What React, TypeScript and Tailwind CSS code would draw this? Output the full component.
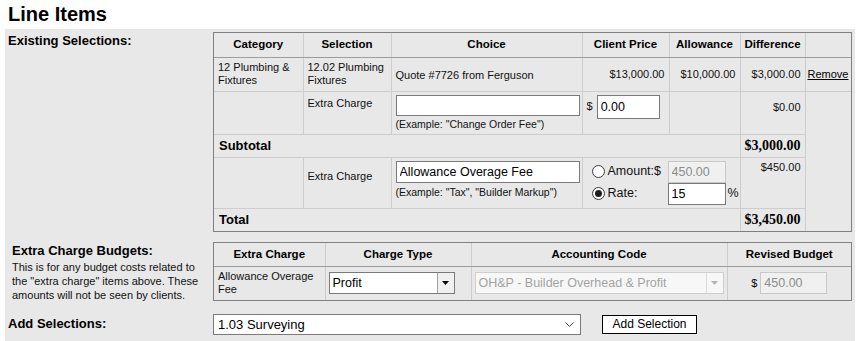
import React from 'react'

const cell = 'border border-[#cdcdcd] px-[4px] py-0 align-middle'
const head = 'border border-[#cdcdcd] border-b-[#9c9c9c] text-center text-[11.5px] font-bold text-black align-middle'
const serifTotal = "font-['Liberation_Serif','Times_New_Roman',serif] text-[14px] font-bold text-black"

const TriangleDown: React.FC<{ color?: string }> = ({ color = '#000' }) => (
  <svg width="7" height="4" viewBox="0 0 7 4">
    <path d="M0 0h7L3.5 4z" fill={color} />
  </svg>
)

const Radio: React.FC<{ checked?: boolean }> = ({ checked }) => (
  <span className="flex h-[13px] w-[13px] shrink-0 items-center justify-center rounded-full border border-[#3c3c3c] bg-white">
    {checked && <span className="h-[7px] w-[7px] rounded-full bg-[#1e1e1e]" />}
  </span>
)

interface BoxProps {
  value: string
  className?: string
  disabled?: boolean
}

// plain text box in the old windows look
const TextBox: React.FC<BoxProps> = ({ value, className = '', disabled }) => (
  <input
    readOnly
    value={value}
    className={`block border px-[3px] text-[12.5px] outline-none ${
      disabled ? 'border-[#c8c8c8] bg-[#f0f0f0] text-[#8c8c8c]' : 'border-[#7a7a7a] bg-white text-black'
    } ${className}`}
  />
)

export default function App() {
  return (
    <div className="h-[341px] w-[863px] overflow-hidden bg-white font-['Liberation_Sans',Arial,sans-serif] text-[#111]">
      <h1 className="h-[29px] pl-[8px] pt-[2px] text-[20px] font-bold leading-[24px] text-black">Line Items</h1>

      <div className="ml-[5px] min-h-[320px] w-[850px] bg-[#e8e8e8] pt-[3px]">
        {/* Existing selections */}
        <div className="grid grid-cols-[208px_639px]">
          <div className="pl-[3px] pt-[1px] text-[13px] font-bold leading-[15px] text-black">Existing Selections:</div>
          <div className="border border-[#808080]">
            <table className="w-[637px] table-fixed border-collapse border-hidden text-[11px] leading-[13px]">
              <colgroup>
                <col className="w-[89px]" />
                <col className="w-[88px]" />
                <col className="w-[191px]" />
                <col className="w-[87px]" />
                <col className="w-[71px]" />
                <col className="w-[65px]" />
                <col className="w-[46px]" />
              </colgroup>
              <thead>
                <tr className="h-[24px]">
                  <th className={head}>Category</th>
                  <th className={head}>Selection</th>
                  <th className={head}>Choice</th>
                  <th className={head}>Client Price</th>
                  <th className={head}>Allowance</th>
                  <th className={head}>Difference</th>
                  <th className={head}></th>
                </tr>
              </thead>
              <tbody>
                <tr className="h-[34px]">
                  <td className={cell}>
                    12 Plumbing &amp;
                    <br />
                    Fixtures
                  </td>
                  <td className={cell}>
                    12.02 Plumbing
                    <br />
                    Fixtures
                  </td>
                  <td className={`${cell} pt-[3px]`}>Quote #7726 from Ferguson</td>
                  <td className={`${cell} text-right`}>$13,000.00</td>
                  <td className={`${cell} text-right`}>$10,000.00</td>
                  <td className={`${cell} text-right`}>$3,000.00</td>
                  <td className={`${cell} pl-[2px]`}>
                    <span className="text-black underline">Remove</span>
                  </td>
                </tr>
                <tr className="h-[43px]">
                  <td className={cell}></td>
                  <td className={`${cell} pt-[5px] align-top`}>Extra Charge</td>
                  <td className={`${cell} pt-[3px] align-top`}>
                    <TextBox value="" className="h-[21px] w-[184px]" />
                    <div className="mt-[2px] text-[10.5px] leading-[12px]">(Example: "Change Order Fee")</div>
                  </td>
                  <td className={`${cell} pt-[3px] align-top`}>
                    <div className="flex items-center">
                      <span className="mr-[4px]">$</span>
                      <TextBox value="0.00" className="h-[24px] w-[63px]" />
                    </div>
                  </td>
                  <td className={cell}></td>
                  <td className={`${cell} pt-[9px] text-right align-top`}>$0.00</td>
                  <td className={cell} rowSpan={5}></td>
                </tr>
                <tr className="h-[23px]">
                  <td className={`${cell} pl-[5px] text-[13px] font-bold text-black`} colSpan={5}>
                    Subtotal
                  </td>
                  <td className={`${cell} text-right ${serifTotal}`}>$3,000.00</td>
                </tr>
                <tr className="h-[51px]">
                  <td className={cell}></td>
                  <td className={`${cell} pt-[12px] align-top`}>Extra Charge</td>
                  <td className={`${cell} pt-[3px] align-top`}>
                    <TextBox value="Allowance Overage Fee" className="h-[22px] w-[184px]" />
                    <div className="mt-[3px] text-[10.5px] leading-[12px]">(Example: "Tax", "Builder Markup")</div>
                  </td>
                  <td className={`${cell} pl-[9px] pt-[3px] align-top`} colSpan={2}>
                    <div className="grid grid-cols-[76px_58px_auto] grid-rows-[22px_22px] items-center text-[12.5px]">
                      <div className="flex items-center gap-[3px]">
                        <Radio />
                        <span>Amount:$</span>
                      </div>
                      <TextBox value="450.00" disabled className="h-[22px] w-[58px]" />
                      <span></span>
                      <div className="flex items-center gap-[3px]">
                        <Radio checked />
                        <span>Rate:</span>
                      </div>
                      <TextBox value="15" className="h-[22px] w-[58px]" />
                      <span className="pl-[2px]">%</span>
                    </div>
                  </td>
                  <td className={`${cell} pt-[3px] text-right align-top`}>$450.00</td>
                </tr>
                <tr className="h-[23px]">
                  <td className={`${cell} pl-[5px] text-[13px] font-bold text-black`} colSpan={5}>
                    Total
                  </td>
                  <td className={`${cell} text-right ${serifTotal}`}>$3,450.00</td>
                </tr>
              </tbody>
            </table>
          </div>
        </div>

        {/* Extra charge budgets */}
        <div className="mt-[10px] grid grid-cols-[208px_639px]">
          <div className="pl-[7px]">
            <div className="pt-[1px] text-[13px] font-bold leading-[15px] text-black">Extra Charge Budgets:</div>
            <div className="mt-[2px] w-[192px] text-[11px] leading-[14px]">
              This is for any budget costs related to the "extra charge" items above. These amounts will not be seen by
              clients.
            </div>
          </div>
          <div className="self-start border border-[#808080]">
            <table className="w-[637px] table-fixed border-collapse border-hidden text-[11px] leading-[13px]">
              <colgroup>
                <col className="w-[111px]" />
                <col className="w-[146px]" />
                <col className="w-[256px]" />
                <col className="w-[124px]" />
              </colgroup>
              <thead>
                <tr className="h-[23px]">
                  <th className={head}>Extra Charge</th>
                  <th className={head}>Charge Type</th>
                  <th className={head}>Accounting Code</th>
                  <th className={head}>Revised Budget</th>
                </tr>
              </thead>
              <tbody>
                <tr className="h-[34px]">
                  <td className={cell}>
                    Allowance Overage
                    <br />
                    Fee
                  </td>
                  <td className={`${cell} pl-[3px]`}>
                    <div className="flex h-[22px] w-[126px] items-stretch border border-[#7a7a7a] bg-white">
                      <span className="flex-1 pl-[3px] text-[12.5px] leading-[20px] text-black">Profit</span>
                      <span className="flex w-[17px] items-center justify-center border-l border-[#a0a0a0] bg-[#f0f0f0]">
                        <TriangleDown />
                      </span>
                    </div>
                  </td>
                  <td className={`${cell} pl-[3px]`}>
                    <div className="flex h-[22px] w-[249px] items-stretch border border-[#cfcfcf] bg-[#f7f7f7]">
                      <span className="flex-1 pl-[3px] text-[12.5px] leading-[20px] text-[#a3a3a3]">
                        OH&amp;P - Builder Overhead &amp; Profit
                      </span>
                      <span className="flex w-[17px] items-center justify-center border-l border-[#dcdcdc]">
                        <TriangleDown color="#b4b4b4" />
                      </span>
                    </div>
                  </td>
                  <td className={cell}>
                    <div className="flex items-center justify-center">
                      <span className="mr-[3px] text-black">$</span>
                      <TextBox value="450.00" disabled className="h-[22px] w-[67px]" />
                    </div>
                  </td>
                </tr>
              </tbody>
            </table>
          </div>
        </div>

        {/* Add selections */}
        <div className="mt-[12px] grid grid-cols-[208px_639px] items-start">
          <div className="pl-[3px] pt-[2px] text-[13px] font-bold leading-[15px] text-black">Add Selections:</div>
          <div className="flex items-center">
            <div className="flex h-[21px] w-[368px] items-center justify-between border border-[#7a7a7a] bg-white pl-[4px] pr-[6px]">
              <span className="text-[13px] text-black">1.03 Surveying</span>
              <svg width="9" height="5" viewBox="0 0 9 5" fill="none">
                <path d="M0.5 0.5L4.5 4.5L8.5 0.5" stroke="#444" strokeWidth="1" />
              </svg>
            </div>
            <button className="ml-[21px] h-[19px] w-[95px] border border-black bg-white text-[12px] leading-[17px] text-black">
              Add Selection
            </button>
          </div>
        </div>
      </div>
    </div>
  )
}
